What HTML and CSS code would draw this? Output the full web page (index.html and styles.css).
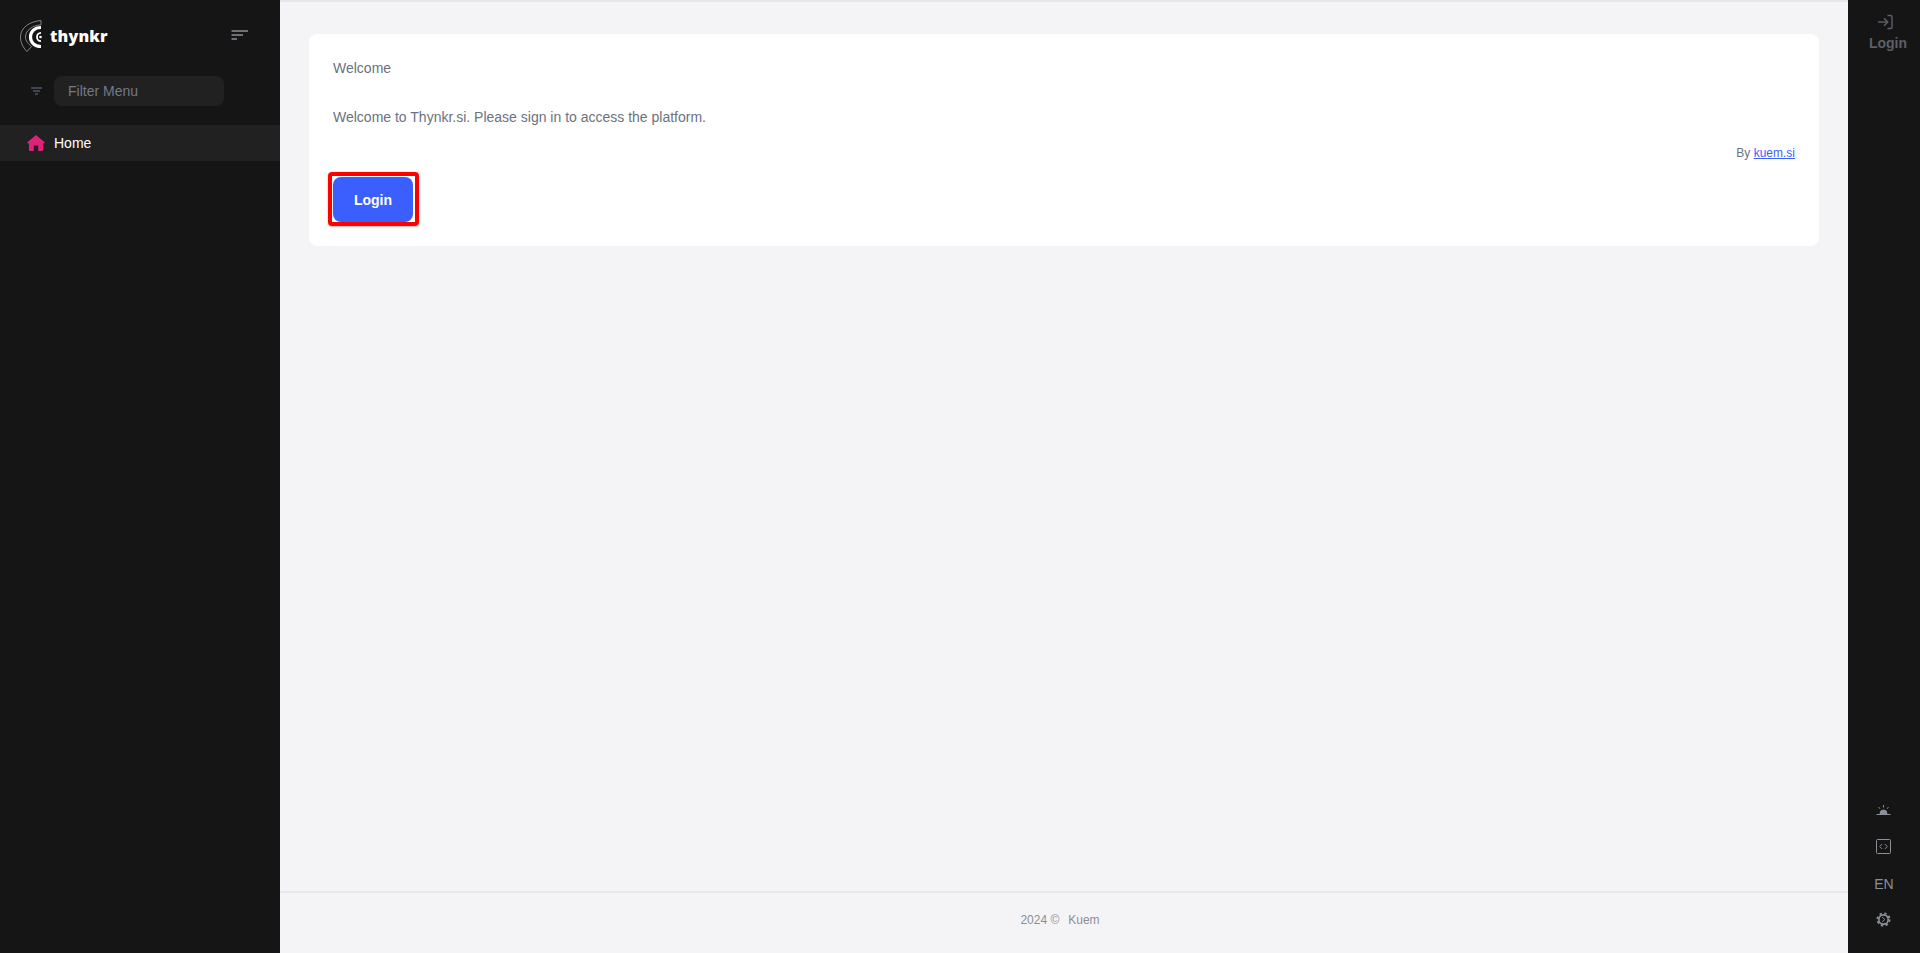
FILE: index.html
```html
<!DOCTYPE html>
<html lang="en">
<head>
<meta charset="utf-8">
<title>Thynkr</title>
<link rel="stylesheet" href="styles.css">
</head>
<body>
<div class="app">
  <aside class="sidebar">
    <div class="brand">
      <a class="logo" href="#">
        <svg class="logo-mark" width="22" height="32" viewBox="0 0 22 32" fill="none">
          <path d="M21 0.500 C9 1.500 0.500 8 0.500 17 C0.500 22 2.500 27 7 31.500 L11.500 26.500 C8.500 24 5.500 21 5.500 17 C5.500 10.500 12 5.500 21 4.800 Z" stroke="#a0a0a0" stroke-width="0.800"/>
          <path d="M21 7.500 C14 7.500 10.500 12 10.500 17 C10.500 22 14 26.500 21 26.500" stroke="#fff" stroke-width="3.200"/>
          <path d="M21 12.800 C18.500 12.800 17 14.800 17 17 C17 19.200 18.500 21.200 21 21.200" stroke="#fff" stroke-width="1.800"/>
          <circle cx="20.500" cy="17" r="1.300" fill="#fff"/>
        </svg>
        <span class="logo-text">thynkr</span>
      </a>
      <button class="collapse" type="button" aria-label="Collapse">
        <svg width="17" height="10" viewBox="0 0 17 10" fill="none" stroke="#8b8f98" stroke-width="1.500">
          <path d="M0.500 1H17"/><path d="M0.500 5H12"/><path d="M0.500 9H6"/>
        </svg>
      </button>
    </div>
    <div class="filter">
      <svg class="filter-icon" width="11" height="8" viewBox="0 0 11 8" fill="none" stroke="#6b7690" stroke-width="1">
        <path d="M0 1H11"/><path d="M2 4H9"/><path d="M4 7H7"/>
      </svg>
      <div class="filter-input">Filter Menu</div>
    </div>
    <nav class="menu">
      <a class="menu-item" href="#">
        <svg width="18" height="16" viewBox="0 0 18 16" fill="#dd2277">
          <path d="M9 0 L18 7.600 L16.200 8.700 L16 8.500 V15 Q16 16 15 16 H11.200 V10.500 H6.800 V16 H3 Q2 16 2 15 V8.500 L1.800 8.700 L0 7.600 Z"/>
        </svg>
        <span>Home</span>
      </a>
    </nav>
  </aside>
  <div class="main">
    <main class="content">
      <section class="card">
        <p class="card-title">Welcome</p>
        <p class="card-text">Welcome to Thynkr.si. Please sign in to access the platform.</p>
        <p class="byline">By <a href="#">kuem.si</a></p>
        <div class="login-mark"><button class="login-btn" type="button">Login</button></div>
      </section>
    </main>
    <footer class="footer"><span>2024 ©</span><span>Kuem</span></footer>
  </div>
  <aside class="rail">
    <a class="rail-login" href="#">
      <svg class="rail-login-icon" width="16" height="16" viewBox="0 0 16 16" fill="none" stroke="#5c6068" stroke-width="1.400">
        <path d="M1 8H10.500"/><path d="M7 4.200 L10.800 8 L7 11.800"/><path d="M10.500 1.500H13.500Q15 1.500 15 3V13Q15 14.500 13.500 14.500H10.500"/>
      </svg>
      <span class="rail-login-text">Login</span>
    </a>
    <div class="rail-tools">
      <svg width="15" height="10" viewBox="0 0 15 10" fill="none" stroke="#8a8f9a" stroke-width="1">
        <path d="M0.500 9.500H14.500"/><path d="M4 8.500A3.500 3.500 0 0 1 11 8.500Z" fill="#8a8f9a"/><path d="M7.500 0V2.500"/><path d="M2.500 2L4 3.800"/><path d="M12.500 2L11 3.800"/>
      </svg>
      <svg class="tool-code" width="15" height="15" viewBox="0 0 15 15" fill="none" stroke="#8a8f9a" stroke-width="1">
        <rect x="0.500" y="0.500" width="14" height="14" rx="1"/><path d="M6.200 5L3.700 7.500L6.200 10"/><path d="M8.800 5L11.300 7.500L8.800 10"/>
      </svg>
      <span class="lang">EN</span>
      <svg class="tool-gear" width="15" height="15" viewBox="0 0 16 16" fill="none" stroke="#8a8f9a">
        <circle cx="8" cy="8" r="5" stroke-width="1.800"/>
        <circle cx="8" cy="8" r="6.600" stroke-width="1.800" stroke-dasharray="2.600 2.580"/>
        <path d="M6.500 5.500L9.500 8L6.500 10.500" stroke-width="1"/>
      </svg>
    </div>
  </aside>
</div>
</body>
</html>
```
FILE: styles.css
```css
* { box-sizing: border-box; }
html, body { margin: 0; height: 100%; }
body { font-family: "Liberation Sans", Arial, sans-serif; font-size: 14px; background: #f4f4f6; overflow: hidden; }
a { text-decoration: none; }
.app { display: flex; height: 953px; }

.sidebar { width: 280px; flex: none; background: #151515; }
.brand { display: flex; align-items: center; justify-content: space-between; height: 70px; padding: 0 32px 0 20px; }
.logo { display: flex; align-items: center; gap: 8px; margin-top: 1px; }
.logo-text { font-family: "Open Sans", sans-serif; font-weight: 800; font-size: 16px; line-height: 20px; color: #fff; letter-spacing: 0.2px; }
.collapse { display: flex; padding: 0; border: 0; background: none; }
.filter { display: flex; align-items: center; gap: 12px; padding: 6px 0 0 31px; }
.filter-input { width: 170px; height: 30px; padding: 0 14px; border-radius: 8px; background: #212121; color: #737a88; line-height: 30px; }
.menu { margin-top: 19px; }
.menu-item { display: flex; align-items: center; gap: 9px; height: 36px; padding-left: 27px; background: #212121; color: #fff; }

.main { flex: 1; min-width: 0; display: flex; flex-direction: column; border-top: 2px solid #e5e7eb; }
.content { flex: 1; padding: 32px 29px 0; }
.card { height: 212px; padding: 24px; background: #fff; border-radius: 8px; color: #6b7280; }
.card p { margin: 0; line-height: 20px; }
.card .card-text { margin-top: 29px; }
.card .byline { margin-top: 17px; font-size: 12px; line-height: 18px; text-align: right; }
.byline a { color: #3b5fff; text-decoration: underline; }
.login-mark { width: 91px; height: 54px; margin: 10px 0 0 -5px; padding: 1px 2px 0 1px; border: 4px solid #f00; border-radius: 4px; box-shadow: 0 1px 2px rgba(0, 0, 0, .3); }
.login-btn { display: block; width: 80px; height: 45px; padding: 0; border: 0; border-radius: 8px; background: #3b5fff; color: #fff; font: 700 14px "Liberation Sans", Arial, sans-serif; }
.footer { height: 62px; flex: none; display: flex; align-items: center; justify-content: center; gap: 9px; padding: 0 8px 6px 0; border-top: 2px solid #e5e7eb; font-size: 12px; color: #8a8f98; }

.rail { width: 72px; flex: none; display: flex; flex-direction: column; align-items: center; justify-content: space-between; background: #151515; padding: 14px 0 26px; }
.rail-login { display: flex; flex-direction: column; align-items: center; gap: 4px; color: #5c6068; font-weight: 700; font-size: 14px; line-height: 18px; }
.rail-login-icon { margin-left: 2px; }
.rail-login-text { margin-left: 8px; }
.rail-tools { display: flex; flex-direction: column; align-items: center; gap: 22px; color: #8a8f9a; }
.tool-code { margin-top: 2px; }
.tool-gear { margin-top: -2px; }
.lang { font-size: 14px; line-height: 16px; }
```
